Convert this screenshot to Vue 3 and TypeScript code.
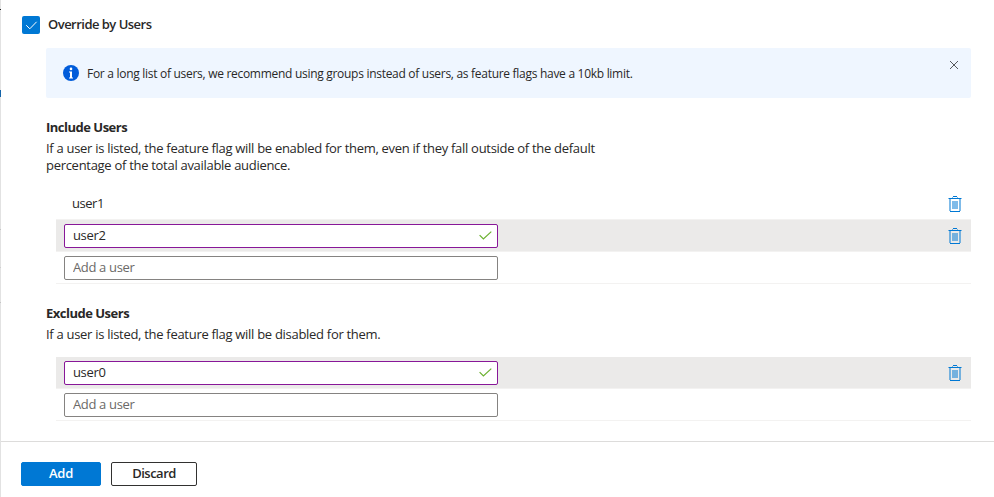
<script setup lang="ts">
import { ref } from 'vue'

interface UserRow {
  name: string
  editing: boolean
}

interface UserSection {
  id: string
  title: string
  lines: string[]
  rows: UserRow[]
}

const enabled = ref(true)
const showInfo = ref(true)

const sections = ref<UserSection[]>([
  {
    id: 'include',
    title: 'Include Users',
    lines: [
      'If a user is listed, the feature flag will be enabled for them, even if they fall outside of the default',
      'percentage of the total available audience.',
    ],
    rows: [
      { name: 'user1', editing: false },
      { name: 'user2', editing: true },
    ],
  },
  {
    id: 'exclude',
    title: 'Exclude Users',
    lines: ['If a user is listed, the feature flag will be disabled for them.'],
    rows: [{ name: 'user0', editing: true }],
  },
])

function removeRow(section: UserSection, index: number): void {
  section.rows.splice(index, 1)
}
</script>

<template>
  <div class="page">
    <div class="edge"></div>
    <div class="panel">
      <main class="body">
        <div class="override">
          <button class="checkbox" :class="{ on: enabled }" @click="enabled = !enabled">
            <svg v-if="enabled" width="18" height="18" viewBox="0 0 18 18">
              <path d="M4.2 9.2 7.8 12.8 14.6 5.8" fill="none" stroke="#fff" stroke-width="1" />
            </svg>
          </button>
          <span class="override-label">Override by Users</span>
        </div>

        <div class="content">
          <div v-if="showInfo" class="info">
            <svg class="info-icon" width="16" height="16" viewBox="0 0 16 16">
              <circle cx="8" cy="8" r="8" fill="#015cda" />
              <circle cx="8" cy="3.9" r="1.3" fill="#fff" />
              <path d="M6 6.4h3v6.1h1v1H6v-1h1V7.4H6z" fill="#fff" />
            </svg>
            <span class="info-text">For a long list of users, we recommend using groups instead of users, as feature flags have a 10kb limit.</span>
            <button class="close" @click="showInfo = false">
              <svg width="8" height="8" viewBox="0 0 8 8">
                <path d="M0 0 8 8M8 0 0 8" stroke="#55585c" stroke-width="1" />
              </svg>
            </button>
          </div>

          <section v-for="s in sections" :key="s.id" class="section">
            <h3>{{ s.title }}</h3>
            <p v-for="l in s.lines" :key="l">{{ l }}</p>
            <div class="list">
              <div v-for="(r, i) in s.rows" :key="i" class="row" :class="{ active: r.editing }">
                <div v-if="r.editing" class="field dirty">
                  <input v-model="r.name" type="text" />
                  <svg class="tick" width="13" height="9" viewBox="0 0 13 9">
                    <path d="M.6 4.2 4.4 8 12.3 .6" fill="none" stroke="#6bb12f" stroke-width="1.2" />
                  </svg>
                </div>
                <span v-else class="name">{{ r.name }}</span>
                <button class="trash" @click="removeRow(s, i)">
                  <svg width="14" height="16" viewBox="0 0 14 16" shape-rendering="crispEdges">
                    <path d="M4 1h1v1H4zM9 1h1v1H9zM1 3h2v12H1zM11 3h2v12h-2zM4 5h6v8H4zM0 2h1v1H0zM13 2h1v1h-1z" fill="#0078d4" fill-opacity=".5" />
                    <path d="M5 0h4v1H5zM1 2h12v1H1zM2 15h10v1H2z" fill="#0078d4" />
                  </svg>
                </button>
              </div>
              <div class="row">
                <div class="field"><input type="text" placeholder="Add a user" /></div>
              </div>
            </div>
          </section>
        </div>
      </main>

      <footer class="footer">
        <button class="btn primary">Add</button>
        <button class="btn">Discard</button>
      </footer>
    </div>
  </div>
</template>

<style>
body {
  margin: 0;
  background: #fff;
}
</style>

<style scoped>
* {
  box-sizing: border-box;
}
.page {
  display: flex;
  height: 497px;
  width: 994px;
  overflow: hidden;
  font-family: "Open Sans", "Noto Sans", sans-serif;
  font-size: 13px;
  color: #292827;
}
.edge {
  width: 1px;
  flex: none;
  background: linear-gradient(#e2e2e2 0 9px, #222 9px 10px, #e2e2e2 10px 90px, #1463a8 90px 97px, #e2e2e2 97px 229px, #c4c4c4 229px 230px, #e2e2e2 230px 267px, #cfcfcf 267px 268px, #e2e2e2 268px 302px, #c4c4c4 302px 303px, #e2e2e2 303px);
}
.panel {
  flex: 1;
  display: flex;
  flex-direction: column;
}
.body {
  height: 441px;
  padding: 16px 23px 0 21px;
}
button {
  font: inherit;
  padding: 0;
  border: 0;
  background: none;
}
svg {
  display: block;
}
.override {
  display: flex;
  height: 18px;
  align-items: center;
  gap: 8px;
}
.checkbox {
  width: 18px;
  height: 18px;
  border: 1px solid #605e5c;
  border-radius: 2px;
}
.checkbox.on {
  border: 0;
  background: #0078d4;
}
.override-label {
  padding-bottom: 2px;
  font-weight: 600;
  letter-spacing: -0.52px;
}
.content {
  padding: 14px 0 0 24px;
}
.info {
  display: flex;
  height: 50px;
  padding: 0 13px 0 17px;
  align-items: center;
  background: #eff6ff;
  border-radius: 2px;
}
.info-text {
  margin-left: 8px;
  flex: 1;
  font-size: 12px;
  letter-spacing: -0.29px;
  white-space: nowrap;
}
.close {
  align-self: flex-start;
  margin-top: 13px;
}
.section {
  padding-top: 20px;
}
h3 {
  margin: 0 0 4px;
  font-size: 13px;
  line-height: 18px;
  font-weight: 700;
  letter-spacing: -0.5px;
}
p {
  margin: 0;
  line-height: 17px;
  letter-spacing: -0.293px;
  white-space: nowrap;
}
.list {
  margin: 14px 0 0 10px;
}
.row {
  display: flex;
  height: 32px;
  padding: 0 9px 0 8px;
  align-items: center;
  justify-content: space-between;
  border-bottom: 1px solid #f3f2f1;
}
.row.active {
  background: #ebeae9;
  background-clip: padding-box;
}
.name {
  padding: 0 0 2px 8px;
  letter-spacing: -0.45px;
}
.field {
  display: flex;
  width: 434px;
  height: 24px;
  padding: 0 5px 0 8px;
  align-items: center;
  border: 1px solid #858381;
  border-radius: 2px;
  background: #fff;
}
.field.dirty {
  border-color: #881798;
}
input {
  flex: 1;
  min-width: 0;
  height: 22px;
  padding: 0 0 2px;
  border: 0;
  outline: 0;
  background: none;
  font: inherit;
  color: inherit;
  letter-spacing: -0.35px;
}
input::placeholder {
  color: #6b6967;
  opacity: 1;
}
.footer {
  display: flex;
  height: 56px;
  padding: 20px 20px 0;
  gap: 10px;
  border-top: 1px solid #dddcdb;
}
.btn {
  width: 86px;
  height: 24px;
  padding-bottom: 2px;
  border: 1px solid #323130;
  border-radius: 2px;
  background: #fff;
  color: #292827;
  font-weight: 600;
  line-height: 20px;
  letter-spacing: -0.5px;
}
.btn.primary {
  width: 80px;
  border-color: #0078d4;
  background: #0078d4;
  color: #fff;
  letter-spacing: -0.2px;
}
</style>
